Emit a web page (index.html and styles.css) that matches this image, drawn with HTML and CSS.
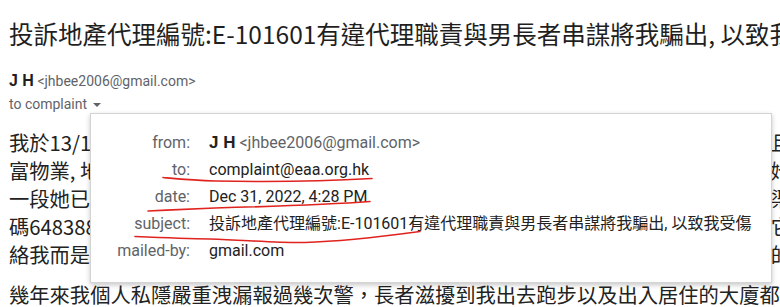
FILE: index.html
```html
<!DOCTYPE html>
<html lang="zh-Hant">
<head>
<meta charset="utf-8">
<title>投訴地產代理</title>
<link rel="stylesheet" href="styles.css">
</head>
<body>
<div class="page">
  <h1 class="subject">投訴地產代理編號:E-101601有違代理職責與男長者串謀將我騙出, 以致我受傷</h1>
  <div class="sender"><span class="name">J H</span> <span class="addr">&lt;jhbee2006@gmail.com&gt;</span></div>
  <div class="recipients">to complaint <span class="caret"></span></div>
  <div class="body">
    <div class="line"><span class="a">我於13/12/2022經地產代理睇樓，該代理帶我到附近一個屋苑單位，期間一直跟住我並且</span><span class="b">且</span></div>
    <div class="line"><span class="a">富物業, 地產代理同男長者一齊出現，我覺得好奇怪，之後我先知道原來佢哋早已經認識她</span><span class="b">她</span></div>
    <div class="line"><span class="a">一段她已經同男長者串通好，目的係要將我騙出屋企，令我之後無法安心生活同埋返工渠</span><span class="b">渠</span></div>
    <div class="line"><span class="a">碼648388的代理牌照持有人，佢冇按照代理職責保障客戶私隱，反而將我嘅資料交俾它</span><span class="b">它</span></div>
    <div class="line"><span class="a">絡我而是直接帶男長者上嚟搵我，我之後報警求助，警方話要我自己搜集證據先可以跟進的</span><span class="b">的</span></div>
    <div class="line last"><span class="a">幾年來我個人私隱嚴重洩漏報過幾次警，長者滋擾到我出去跑步以及出入居住的大廈都有人跟蹤</span></div>
  </div>

  <div class="details">
    <dl class="grid">
      <dt>from:</dt><dd><b>J H</b> <span class="muted">&lt;jhbee2006@gmail.com&gt;</span></dd>
      <dt>to:</dt><dd>complaint@eaa.org.hk</dd>
      <dt>date:</dt><dd>Dec 31, 2022, 4:28 PM</dd>
      <dt>subject:</dt><dd>投訴地產代理編號:E-101601有違代理職責與男長者串謀將我騙出, 以致我受傷</dd>
      <dt>mailed-by:</dt><dd>gmail.com</dd>
    </dl>
    <svg class="marks" width="682" height="170" viewBox="0 0 682 170" aria-hidden="true">
      <path d="M73 64.5 C 95 66.5, 105 67.5, 125 68 C 170 69, 230 68.5, 282 65.5" />
      <path d="M58 98 C 80 97, 100 96, 125 95 C 180 93.5, 240 91.5, 280 88.5" />
      <path d="M45 123.5 C 70 124.5, 95 125.5, 120 126 C 160 127.5, 190 130, 215 129.5 C 250 128.5, 285 124.5, 330 118.5" />
    </svg>
  </div>
</div>
</body>
</html>
```

FILE: styles.css
```css
html, body {
  margin: 0;
  padding: 0;
  background: #fff;
  overflow: hidden;
}

.page {
  width: 780px;
  height: 307px;
  padding: 18px 0 0 9px;
  box-sizing: border-box;
  position: relative;
  font-family: Roboto, "Noto Sans CJK TC", "Noto Sans", sans-serif;
  color: #1f1f1f;
}

.subject {
  margin: 0;
  font-family: "Noto Sans CJK TC", sans-serif;
  font-weight: 400;
  font-size: 24.5px;
  line-height: 32px;
  white-space: nowrap;
  overflow: hidden;
  color: #1f1f1f;
}

.sender {
  margin-top: 21px;
  line-height: 20px;
  font-size: 14px;
  color: #5f6368;
}

.sender .name {
  font-family: "Liberation Sans", Arial, sans-serif;
  font-weight: 700;
  font-size: 16px;
  color: #1f1f1f;
}

.recipients {
  margin-top: 3px;
  line-height: 20px;
  font-size: 14px;
  color: #5f6368;
  display: flex;
  align-items: center;
  gap: 6px;
}

.caret {
  width: 0;
  height: 0;
  border-left: 4px solid transparent;
  border-right: 4px solid transparent;
  border-top: 4px solid #5f6368;
  margin-top: 2px;
}

.body {
  margin-top: 14px;
  font-family: "Noto Sans CJK TC", sans-serif;
  font-size: 20.3px;
  line-height: 28px;
  color: #222;
}

.line {
  display: flex;
  width: 782px;
}

.line .a {
  flex: 1;
  min-width: 0;
  overflow: hidden;
  white-space: nowrap;
}

.line .b {
  flex: none;
}

.line.last {
  margin-top: 12px;
}

.details {
  position: absolute;
  top: 113px;
  left: 90px;
  width: 682px;
  height: 170px;
  box-sizing: border-box;
  background: #fff;
  border: 1px solid #d4d4d4;
  box-shadow: 0 2px 5px rgba(0, 0, 0, 0.22);
}

.grid {
  margin: 0;
  padding: 15px 0 0 0;
  display: grid;
  grid-template-columns: 99px 1fr;
  column-gap: 19px;
  font-size: 16px;
  line-height: 27px;
}

.grid dt {
  text-align: right;
  color: #5f6368;
}

.grid dd {
  margin: 0;
  color: #222;
  white-space: nowrap;
}

.grid dd b {
  font-family: "Liberation Sans", Arial, sans-serif;
  font-weight: 700;
  font-size: 17px;
}

.grid .muted {
  color: #5f6368;
}

.marks {
  position: absolute;
  left: -1px;
  top: -1px;
  pointer-events: none;
}

.marks path {
  fill: none;
  stroke: #e0231f;
  stroke-width: 1.6;
  stroke-linecap: round;
}
```
